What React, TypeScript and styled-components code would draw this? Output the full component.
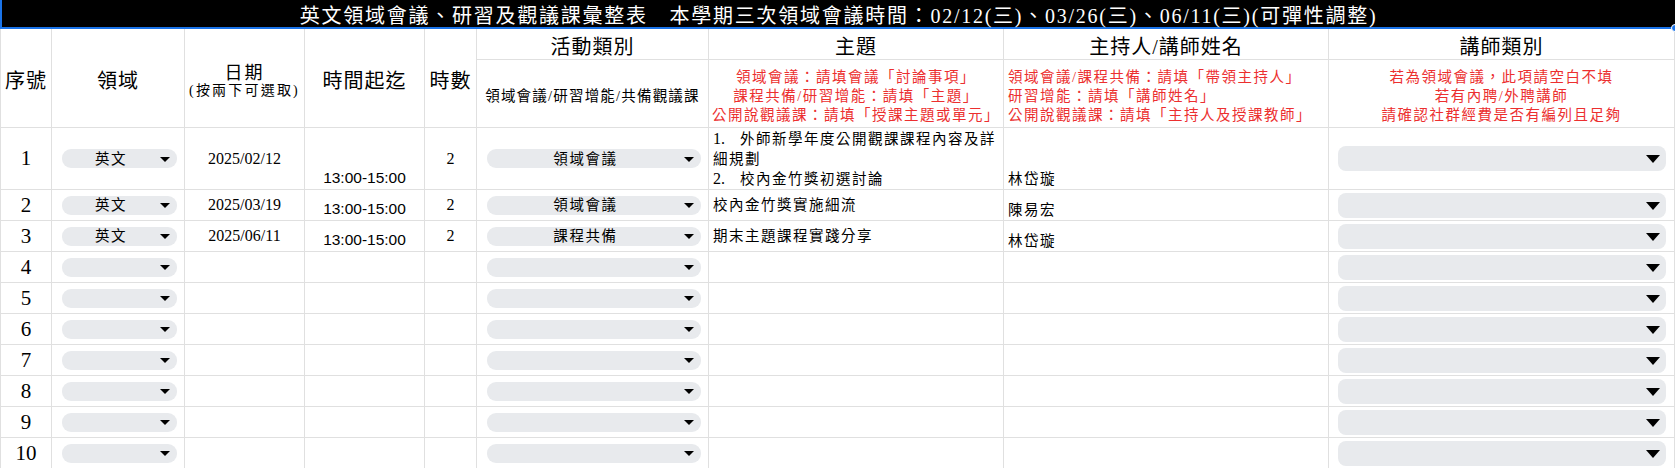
import React from 'react';
import styled, { createGlobalStyle } from 'styled-components';

const LINE = '#e0e0e0';
const RED = '#ec2f2f';
const CHIP = '#e8eaed';
const FONT = '"Liberation Serif", "Noto Sans CJK TC", serif';

const GlobalStyle = createGlobalStyle`
  html, body { margin: 0; padding: 0; background: #ffffff; }
  body { font-family: ${FONT}; color: #000; overflow: hidden; }
  *, *::before, *::after { box-sizing: border-box; }
`;

const COLS = [52, 133, 120, 120, 52, 232, 295, 325, 346];

const Sheet = styled.div`
  display: grid;
  grid-template-columns: ${COLS.map((c) => `${c}px`).join(' ')};
  grid-template-rows: 29px 31px 68px 62px repeat(9, 31px);
  width: 1675px;
  height: 468px;
  overflow: hidden;
`;

const TitleBar = styled.div`
  grid-column: 1 / -1;
  position: relative;
  background: #000;
  color: #fff;
  border-left: 2px solid #1a73e8;
  border-bottom: 2px solid #1a73e8;
  display: flex;
  align-items: center;
  justify-content: center;
  padding-top: 4px;
  font-size: 20px;
  letter-spacing: 1.75px;
  white-space: nowrap;
  line-height: 1;
`;

const Handle = styled.span`
  position: absolute;
  right: -4px;
  bottom: -5px;
  width: 8px;
  height: 8px;
  border-radius: 50%;
  background: #1a73e8;
  border: 1px solid #fff;
`;

const Head = styled.div<{ $span?: boolean; $first?: boolean; $pt?: number }>`
  grid-row: span ${(p) => (p.$span ? 2 : 1)};
  display: flex;
  flex-direction: column;
  align-items: center;
  justify-content: center;
  padding-top: ${(p) => p.$pt ?? 0}px;
  border-right: 1px solid ${LINE};
  border-bottom: 1px solid ${LINE};
  ${(p) => (p.$first ? `border-left: 1px solid ${LINE};` : '')}
  overflow: hidden;
  white-space: nowrap;
`;

const HeadText = styled.span<{ $size?: number; $ls?: number }>`
  font-size: ${(p) => p.$size ?? 20}px;
  letter-spacing: ${(p) => p.$ls ?? 1}px;
  line-height: 1.15;
`;

const NoteBlock = styled.div<{ $align: 'left' | 'center' }>`
  align-self: stretch;
  display: flex;
  flex-direction: column;
  align-items: ${(p) => (p.$align === 'left' ? 'flex-start' : 'center')};
  padding-left: ${(p) => (p.$align === 'left' ? 4 : 0)}px;
  color: ${RED};
  font-size: 14.5px;
  letter-spacing: 1.5px;
  line-height: 19px;
`;

const Cell = styled.div<{ $h?: 'left' | 'center'; $v?: 'flex-start' | 'center' | 'flex-end'; $first?: boolean }>`
  display: flex;
  flex-direction: column;
  justify-content: ${(p) => p.$v ?? 'center'};
  align-items: ${(p) => (p.$h === 'left' ? 'flex-start' : 'center')};
  padding-left: ${(p) => (p.$h === 'left' ? 4 : 0)}px;
  border-right: 1px solid ${LINE};
  border-bottom: 1px solid ${LINE};
  ${(p) => (p.$first ? `border-left: 1px solid ${LINE};` : '')}
  min-width: 0;
  overflow: hidden;
  white-space: nowrap;
`;

const ChipCell = styled.div<{ $big?: boolean }>`
  display: flex;
  align-items: center;
  padding-left: ${(p) => (p.$big ? 9 : 10)}px;
  padding-right: ${(p) => (p.$big ? 8 : 7)}px;
  border-right: 1px solid ${LINE};
  border-bottom: 1px solid ${LINE};
  min-width: 0;
`;

const Chip = styled.div<{ $big?: boolean }>`
  flex: 1;
  display: flex;
  align-items: center;
  height: ${(p) => (p.$big ? 25 : 19)}px;
  border-radius: ${(p) => (p.$big ? 8 : 9)}px;
  background: ${CHIP};
  padding-right: ${(p) => (p.$big ? 6 : 7)}px;
`;

const ChipLabel = styled.span`
  flex: 1;
  text-align: center;
  font-size: 14.5px;
  letter-spacing: 1.6px;
  line-height: 1;
  padding-top: 1px;
`;

const Arrow = styled.span<{ $big?: boolean }>`
  width: 0;
  height: 0;
  border-left: ${(p) => (p.$big ? 7 : 5)}px solid transparent;
  border-right: ${(p) => (p.$big ? 7 : 5)}px solid transparent;
  border-top: ${(p) => (p.$big ? 8 : 5.5)}px solid #000;
  margin-top: 1px;
`;

const RowNum = styled.span`
  font-size: 21px;
  line-height: 1;
`;

const DateText = styled.span`
  font-size: 16px;
  line-height: 1;
`;

const TimeText = styled.span`
  font-family: "Liberation Sans", "Noto Sans CJK TC", sans-serif;
  font-size: 15.5px;
  line-height: 16px;
  padding-bottom: 3px;
`;

const TextLine = styled.span`
  font-size: 14.5px;
  letter-spacing: 1.5px;
  line-height: 20px;
`;

const Num = styled.span`
  font-family: ${FONT};
  font-size: 16px;
  letter-spacing: 0;
  margin-right: 15px;
`;

type Row = {
  n: number;
  area?: string;
  date?: string;
  time?: string;
  hours?: string;
  type?: string;
  topic?: React.ReactNode[];
  host?: string;
};

const rows: Row[] = [
  {
    n: 1,
    area: '英文',
    date: '2025/02/12',
    time: '13:00-15:00',
    hours: '2',
    type: '領域會議',
    topic: [
      <>
        <Num>1.</Num>外師新學年度公開觀課課程內容及詳
      </>,
      '細規劃',
      <>
        <Num>2.</Num>校內金竹獎初選討論
      </>,
    ],
    host: '林岱璇',
  },
  { n: 2, area: '英文', date: '2025/03/19', time: '13:00-15:00', hours: '2', type: '領域會議', topic: ['校內金竹獎實施細流'], host: '陳易宏' },
  { n: 3, area: '英文', date: '2025/06/11', time: '13:00-15:00', hours: '2', type: '課程共備', topic: ['期末主題課程實踐分享'], host: '林岱璇' },
  ...[4, 5, 6, 7, 8, 9, 10].map((n) => ({ n })),
];

const Dropdown: React.FC<{ label?: string; big?: boolean }> = ({ label, big }) => (
  <ChipCell $big={big}>
    <Chip $big={big}>
      <ChipLabel>{label}</ChipLabel>
      <Arrow $big={big} />
    </Chip>
  </ChipCell>
);

export default function App() {
  return (
    <>
      <GlobalStyle />
      <Sheet>
        <TitleBar>
          英文領域會議、研習及觀議課彙整表　本學期三次領域會議時間：02/12(三)、03/26(三)、06/11(三)(可彈性調整)
          <Handle />
        </TitleBar>

        <Head $span $first $pt={6}>
          <HeadText>序號</HeadText>
        </Head>
        <Head $span $pt={6}>
          <HeadText>領域</HeadText>
        </Head>
        <Head $span $pt={6}>
          <HeadText $size={18} $ls={2}>日期</HeadText>
          <HeadText $size={14} $ls={2.2}>(按兩下可選取)</HeadText>
        </Head>
        <Head $span $pt={6}>
          <HeadText>時間起迄</HeadText>
        </Head>
        <Head $span $pt={6}>
          <HeadText>時數</HeadText>
        </Head>
        <Head $pt={6}>
          <HeadText>活動類別</HeadText>
        </Head>
        <Head $pt={6}>
          <HeadText>主題</HeadText>
        </Head>
        <Head $pt={6}>
          <HeadText>主持人/講師姓名</HeadText>
        </Head>
        <Head $pt={6}>
          <HeadText>講師類別</HeadText>
        </Head>

        <Head $pt={6}>
          <HeadText $size={14.5} $ls={1.2}>領域會議/研習增能/共備觀議課</HeadText>
        </Head>
        <Head $pt={6}>
          <NoteBlock $align="center">
            <span>領域會議：請填會議「討論事項」</span>
            <span>課程共備/研習增能：請填「主題」</span>
            <span>公開說觀議課：請填「授課主題或單元」</span>
          </NoteBlock>
        </Head>
        <Head $pt={6}>
          <NoteBlock $align="left">
            <span>領域會議/課程共備：請填「帶領主持人」</span>
            <span>研習增能：請填「講師姓名」</span>
            <span>公開說觀議課：請填「主持人及授課教師」</span>
          </NoteBlock>
        </Head>
        <Head $pt={6}>
          <NoteBlock $align="center">
            <span>若為領域會議，此項請空白不填</span>
            <span>若有內聘/外聘講師</span>
            <span>請確認社群經費是否有編列且足夠</span>
          </NoteBlock>
        </Head>

        {rows.map((r) => (
          <React.Fragment key={r.n}>
            <Cell $first>
              <RowNum>{r.n}</RowNum>
            </Cell>
            <Dropdown label={r.area} />
            <Cell>
              <DateText>{r.date}</DateText>
            </Cell>
            <Cell $v="flex-end">
              <TimeText>{r.time}</TimeText>
            </Cell>
            <Cell>
              <DateText>{r.hours}</DateText>
            </Cell>
            <Dropdown label={r.type} />
            <Cell $h="left" $v="center">
              {(r.topic ?? []).map((t, i) => (
                <TextLine key={i}>{t}</TextLine>
              ))}
            </Cell>
            <Cell $h="left" $v="flex-end">
              <TextLine>{r.host}</TextLine>
            </Cell>
            <Dropdown big />
          </React.Fragment>
        ))}
      </Sheet>
    </>
  );
}
